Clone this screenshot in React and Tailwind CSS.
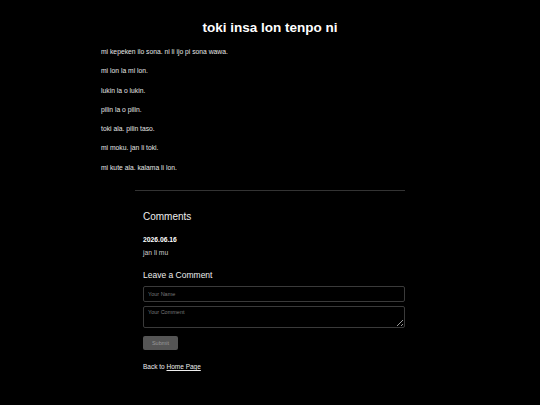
import React from "react";

const lines = [
  "mi kepeken ilo sona. ni li ijo pi sona wawa.",
  "mi lon la mi lon.",
  "lukin la o lukin.",
  "pilin la o pilin.",
  "toki ala. pilin taso.",
  "mi moku. jan li toki.",
  "mi kute ala. kalama li lon.",
];

export default function App() {
  return (
    <div className="w-[540px] h-[405px] overflow-hidden bg-black text-[#e6e6e6] font-['Liberation_Sans',Arial,sans-serif]">
      <h1 className="pt-[20px] text-center text-[13.5px] leading-[16px] font-bold text-white">
        toki insa lon tenpo ni
      </h1>
      <div className="mt-[11px] px-[101px] flex flex-col gap-[9.25px] text-[6.75px] leading-[10px]">
        {lines.map((l) => (
          <p key={l}>{l}</p>
        ))}
      </div>
      <div className="mx-auto mt-[17.5px] w-[270px] border-t border-[#333]">
        <div className="pl-[8px] pr-0">
          <h2 className="mt-[20px] text-[10px] leading-[12px] text-[#eee]">Comments</h2>
          <div className="mt-[12px] text-[6.75px] leading-[10px] font-bold text-white">2026.06.16</div>
          <div className="mt-[3px] text-[6.75px] leading-[10px] text-[#ccc]">jan li mu</div>
          <h3 className="mt-[12px] text-[8.5px] leading-[10px] text-[#eee]">Leave a Comment</h3>
          <input
            className="mt-[6px] block w-[262px] h-[15.5px] rounded-[2px] border border-[#3a3a3a] bg-black px-[4px] text-[5.5px] text-white placeholder:text-[#777] outline-none"
            placeholder="Your Name"
          />
          <textarea
            className="mt-[4px] block w-[262px] h-[22px] rounded-[2px] border border-[#3a3a3a] bg-black px-[4px] py-[2px] text-[5.5px] leading-[7px] text-white placeholder:text-[#777] outline-none"
            placeholder="Your Comment"
          />
          <button className="mt-[8px] block w-[35px] h-[14.5px] rounded-[2px] bg-[#555] text-[5.5px] text-[#999]">
            Submit
          </button>
          <p className="mt-[12px] text-[6.5px] leading-[9px] text-[#eee]">
            Back to <a className="underline text-[#eee]" href="#">Home Page</a>
          </p>
        </div>
      </div>
    </div>
  );
}
